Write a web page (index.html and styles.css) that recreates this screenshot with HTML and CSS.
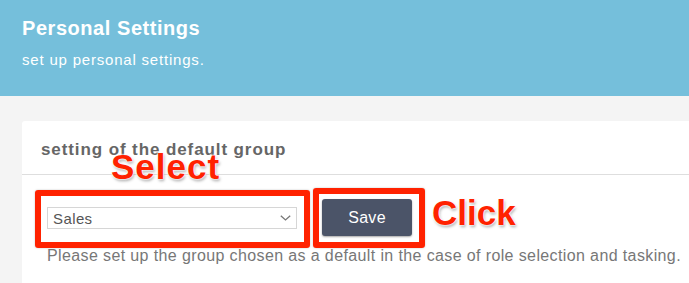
FILE: index.html
```html
<!DOCTYPE html>
<html lang="en">
<head>
<meta charset="utf-8">
<title>Personal Settings</title>
<link rel="stylesheet" href="styles.css">
</head>
<body>
<header class="page-header">
  <h1 class="page-title">Personal Settings</h1>
  <p class="page-subtitle">set up personal settings.</p>
</header>
<main class="page-main">
  <section class="card">
    <div class="card-header">
      <h2 class="card-title">setting of the default group</h2>
    </div>
    <div class="card-body">
      <div class="form-row">
        <div class="select-box">
          <span class="select-value">Sales</span>
          <svg class="select-chevron" width="11" height="6" viewBox="0 0 11 6"><path d="M0.8 0.8 L5.5 5 L10.2 0.8" fill="none" stroke="#777" stroke-width="1.3"/></svg>
        </div>
        <button class="save-btn" type="button">Save</button>
      </div>
      <p class="help-text">Please set up the group chosen as a default in the case of role selection and tasking.</p>
    </div>
  </section>
</main>
<div class="annot annot-box annot-select"></div>
<div class="annot annot-box annot-save"></div>
<div class="annot annot-label annot-label-select">Select</div>
<div class="annot annot-label annot-label-click">Click</div>
</body>
</html>
```
FILE: styles.css
```css
html, body {
  margin: 0;
  padding: 0;
}
body {
  position: relative;
  width: 689px;
  height: 283px;
  overflow: hidden;
  background: #f4f4f4;
  font-family: "Liberation Sans", Arial, sans-serif;
}
.page-header {
  background: #75bfdb;
  height: 96px;
  box-sizing: border-box;
  padding: 16px 22px 0;
  color: #fff;
}
.page-title {
  margin: 0;
  font-size: 20px;
  font-weight: bold;
  line-height: 24px;
  letter-spacing: 0.55px;
}
.page-subtitle {
  margin: 11px 0 0;
  font-size: 15px;
  line-height: 18px;
  letter-spacing: 0.8px;
}
.page-main {
  padding: 25px 0 0 22px;
}
.card {
  background: #fff;
  border-radius: 3px 0 0 0;
  height: 170px;
}
.card-header {
  height: 54px;
  box-sizing: border-box;
  border-bottom: 1px solid #dedede;
  padding: 19px 19px 0;
}
.card-title {
  margin: 0;
  font-size: 17px;
  font-weight: bold;
  line-height: 20px;
  color: #666;
  letter-spacing: 0.9px;
}
.card-body {
  padding: 24px 25px 0;
}
.form-row {
  display: flex;
  align-items: center;
  gap: 25px;
}
.select-box {
  width: 250px;
  height: 22px;
  box-sizing: border-box;
  border: 1px solid #d6d6d6;
  background: #fff;
  display: flex;
  align-items: center;
  justify-content: space-between;
  padding: 0 5px 0 5px;
  margin-top: 1px;
}
.select-value {
  font-size: 15px;
  color: #555;
  letter-spacing: 0.4px;
}
.select-chevron {
  display: block;
}
.save-btn {
  width: 90px;
  height: 37px;
  border: 0;
  border-radius: 3px;
  background: #4b5468;
  color: #fff;
  font-family: "Liberation Sans", Arial, sans-serif;
  font-size: 16px;
  letter-spacing: 0.3px;
  box-shadow: 0 1px 2px rgba(0,0,0,0.35);
  padding: 0;
}
.help-text {
  margin: 11px 0 0;
  font-size: 16px;
  line-height: 18px;
  color: #777;
  letter-spacing: 0.38px;
  white-space: nowrap;
}
.annot {
  position: absolute;
}
.annot-box {
  box-sizing: border-box;
  border: 6px solid #ff2200;
  border-radius: 3px;
  box-shadow: 0 0 2px rgba(0,0,0,0.25);
}
.annot-select {
  left: 35px;
  top: 190px;
  width: 275px;
  height: 58px;
}
.annot-save {
  left: 313px;
  top: 188px;
  width: 112px;
  height: 60px;
}
.annot-label {
  font-family: "Liberation Sans", Arial, sans-serif;
  font-weight: bold;
  font-size: 35px;
  line-height: 40px;
  color: #ff2200;
  text-shadow: 0 0 2px #fff, 0 0 2px #fff, 0 0 2px #fff, 1px 2px 3px rgba(0,0,0,0.35);
}
.annot-label-select {
  left: 111px;
  top: 147px;
  letter-spacing: 1px;
}
.annot-label-click {
  left: 432px;
  top: 193px;
}
```
